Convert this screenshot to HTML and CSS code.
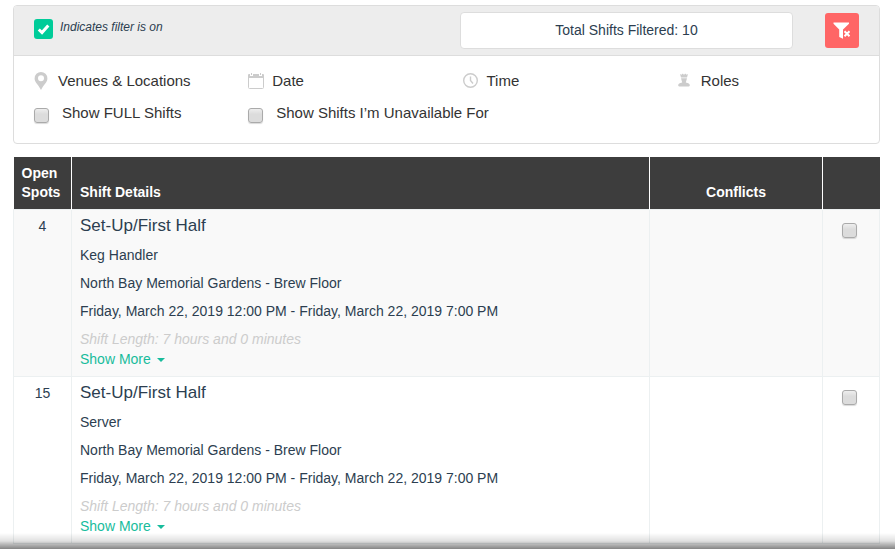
FILE: index.html
```html
<!DOCTYPE html>
<html lang="en">
<head>
    <meta charset="UTF-8">
    <meta name="viewport" content="width=device-width, initial-scale=1.0">
    <title>Open Shifts</title>
    <link rel="stylesheet" href="styles.css">
</head>
<body>
    <!-- Filters -->
    <div class="filter-panel">
        <div class="filter-header">
            <div class="filter-note">
                <svg class="filter-on" viewBox="0 0 19 20">
                    <rect width="19" height="20" rx="3" fill="#00cc99"/>
                    <path d="M4.800 10.500l3.200 3L14.300 6.500" fill="none" stroke="#fff" stroke-width="3"/>
                </svg>
                <em>Indicates filter is on</em>
            </div>
            <div class="filter-total">Total Shifts Filtered: 10</div>
            <button type="button" class="clear-filters" aria-label="Clear filters">
                <svg width="18" height="18" viewBox="0 0 18 18">
                    <path d="M0.500 0.500h15.500v1.200L10 7.500v9.200L6.200 15V7.500L0.500 1.700z" fill="#fff"/>
                    <path d="M11.500 9.200l5 5M16.500 9.200l-5 5" stroke="#ff6666" stroke-width="4"/>
                    <path d="M11.500 9.200l5 5M16.500 9.200l-5 5" stroke="#fff" stroke-width="2"/>
                </svg>
            </button>
        </div>
        <div class="filter-body">
            <a href="#" class="filter-link">
                <svg viewBox="0 0 16 18">
                    <path d="M7 0a6.400 6.400 0 0 0-6.400 6.400C0.600 10.500 4.500 12.500 7 18c2.500-5.500 6.400-7.500 6.400-11.600A6.400 6.400 0 0 0 7 0zm0 3.200a3 3 0 1 1 0 6 3 3 0 0 1 0-6z" fill="#ccc" fill-rule="evenodd"/>
                </svg>
                Venues &amp; Locations
            </a>
            <a href="#" class="filter-link">
                <svg viewBox="0 0 16 18">
                    <path d="M0.500 5v10.500a1 1 0 0 0 1 1h13a1 1 0 0 0 1-1V5" fill="none" stroke="#ccc"/>
                    <path d="M0 3a1 1 0 0 1 1-1h1v2h3V2h6v2h3V2h1a1 1 0 0 1 1 1v3H0zM3 1h1v2H3zM12 1h1v2h-1z" fill="#ccc"/>
                </svg>
                Date
            </a>
            <a href="#" class="filter-link">
                <svg viewBox="0 0 16 18">
                    <circle cx="7.500" cy="8.500" r="6.800" fill="none" stroke="#ccc" stroke-width="1.400"/>
                    <path d="M7.500 4.500v4l2.500 3" fill="none" stroke="#ccc" stroke-width="1.400"/>
                </svg>
                Time
            </a>
            <a href="#" class="filter-link">
                <svg viewBox="0 0 16 18">
                    <path d="M3 2l1.500 0.800L5.500 1.500l1 1.200L7 1.500l0.500 1.200 1-1.200 1 1.300L11 2l-1 3.500H4zM4 6.300h6L8.800 10.500c2.700 0.500 4 1.500 4 2.700 0 1-1 1.300-1.500 1.300H2.700c-0.500 0-1.500-0.300-1.500-1.300 0-1.200 1.300-2.200 4-2.700z" fill="#ccc"/>
                </svg>
                Roles
            </a>
            <label class="filter-check"><input type="checkbox"> Show FULL Shifts</label>
            <label class="filter-check wide"><input type="checkbox"> Show Shifts I’m Unavailable For</label>
        </div>
    </div>

    <!-- Shifts -->
    <table class="shifts">
        <thead>
            <tr>
                <th class="col-spots">Open Spots</th>
                <th class="col-details">Shift Details</th>
                <th class="col-conflicts">Conflicts</th>
                <th class="col-select"></th>
            </tr>
        </thead>
        <tbody>
            <tr>
                <td class="spots">4</td>
                <td>
                    <h3>Set-Up/First Half</h3>
                    <p>Keg Handler</p>
                    <p>North Bay Memorial Gardens - Brew Floor</p>
                    <p>Friday, March 22, 2019 12:00 PM - Friday, March 22, 2019 7:00 PM</p>
                    <p class="length">Shift Length: 7 hours and 0 minutes</p>
                    <a href="#" class="show-more">Show More <span class="caret"></span></a>
                </td>
                <td></td>
                <td class="select"><input type="checkbox" aria-label="Select Keg Handler shift"></td>
            </tr>
            <tr>
                <td class="spots">15</td>
                <td>
                    <h3>Set-Up/First Half</h3>
                    <p>Server</p>
                    <p>North Bay Memorial Gardens - Brew Floor</p>
                    <p>Friday, March 22, 2019 12:00 PM - Friday, March 22, 2019 7:00 PM</p>
                    <p class="length">Shift Length: 7 hours and 0 minutes</p>
                    <a href="#" class="show-more">Show More <span class="caret"></span></a>
                </td>
                <td></td>
                <td class="select"><input type="checkbox" aria-label="Select Server shift"></td>
            </tr>
        </tbody>
    </table>

    <div class="bottom-shade"></div>
</body>
</html>
```
FILE: styles.css
```css
* {
    box-sizing: border-box;
}
body {
    margin: 5px 15px 0 13px;
    font-family: "Liberation Sans", Arial, sans-serif;
    font-size: 14px;
    line-height: 20px;
    color: #2c3e50;
    background-color: #fff;
}
a {
    text-decoration: none;
}
input[type="checkbox"] {
    appearance: none;
    flex: none;
    width: 15px;
    height: 15px;
    margin: 0;
    border: 1px solid #aaa;
    border-radius: 3px;
    background: linear-gradient(#eee, #dcdcdc 40%);
    box-shadow: 0 1px 1px rgba(0,0,0,0.15);
}

/* Filters */
.filter-panel {
    border: 1px solid #ddd;
    border-radius: 4px;
    overflow: hidden;
}
.filter-header {
    display: flex;
    align-items: center;
    height: 50px;
    padding: 0 20px;
    background-color: #ededed;
    border-bottom: 1px solid #ddd;
}
.filter-note {
    display: flex;
    gap: 7px;
    flex: 1;
    margin-bottom: 3px;
    font-size: 12px;
    line-height: 16px;
}
.filter-on {
    width: 19px;
    height: 20px;
}
.filter-total {
    width: 333px;
    line-height: 35px;
    text-align: center;
    background-color: #fff;
    border: 1px solid #ddd;
    border-radius: 4px;
}
.clear-filters {
    width: 34px;
    height: 35px;
    margin-left: 32px;
    padding: 0;
    border: none;
    border-radius: 3px;
    background-color: #ff6666;
    cursor: pointer;
}
.clear-filters svg {
    vertical-align: middle;
}
.filter-body {
    display: grid;
    grid-template-columns: repeat(4, 1fr);
    row-gap: 8px;
    padding: 13px 4px 18px;
    font-size: 15px;
    line-height: 24px;
    color: #333;
}
.filter-link {
    display: flex;
    align-items: center;
    gap: 8px;
    padding-left: 16px;
    color: #333;
}
.filter-link svg {
    width: 16px;
    height: 18px;
}
.filter-check {
    display: flex;
    gap: 13px;
    padding-left: 16px;
}
.filter-check input {
    margin-top: 7px;
}
.wide {
    grid-column: span 2;
}

/* Shifts */
.shifts {
    width: 100%;
    margin-top: 13px;
    table-layout: fixed;
    border-collapse: collapse;
}
.shifts th,
.shifts td {
    border: 1px solid #ecf0f1;
    padding: 6px 8px 7px;
    text-align: left;
    vertical-align: top;
}
.shifts th {
    border-color: #fff;
    border-top: none;
    border-bottom: none;
    background-color: #3d3d3d;
    color: #fff;
    line-height: 19px;
    padding: 7px 8px;
    vertical-align: bottom;
}
.shifts th:first-child {
    border-left: none;
}
.shifts th:last-child {
    border-right: none;
}
.shifts tbody tr:nth-child(odd) {
    background-color: #f9f9f9;
}
.col-spots {
    width: 58px;
}
.shifts .col-conflicts {
    width: 173px;
    text-align: center;
}
.col-select {
    width: 57px;
}
.shifts .spots {
    text-align: center;
}
.shifts .select {
    padding-left: 19px;
}
.select input {
    margin-top: 7px;
}
.shifts h3 {
    margin: 0 0 9px;
    font-size: 17px;
    line-height: 20px;
    font-weight: normal;
}
.shifts p {
    margin: 0 0 8px;
}
.shifts .length {
    margin: 0;
    font-style: italic;
    color: #ccc;
}
.show-more {
    color: #18bc9c;
}
.caret {
    display: inline-block;
    margin-left: 2px;
    border: 4px solid transparent;
    border-top-color: #18bc9c;
    border-bottom: none;
    vertical-align: middle;
}

/* Shadow along the bottom of the window */
.bottom-shade {
    position: fixed;
    left: 0;
    right: 0;
    bottom: 1px;
    height: 16px;
    background: linear-gradient(rgba(0,0,0,0), rgba(0,0,0,0.12) 50%, rgba(0,0,0,0.24) 65%, rgba(0,0,0,0.48));
    pointer-events: none;
}
```
